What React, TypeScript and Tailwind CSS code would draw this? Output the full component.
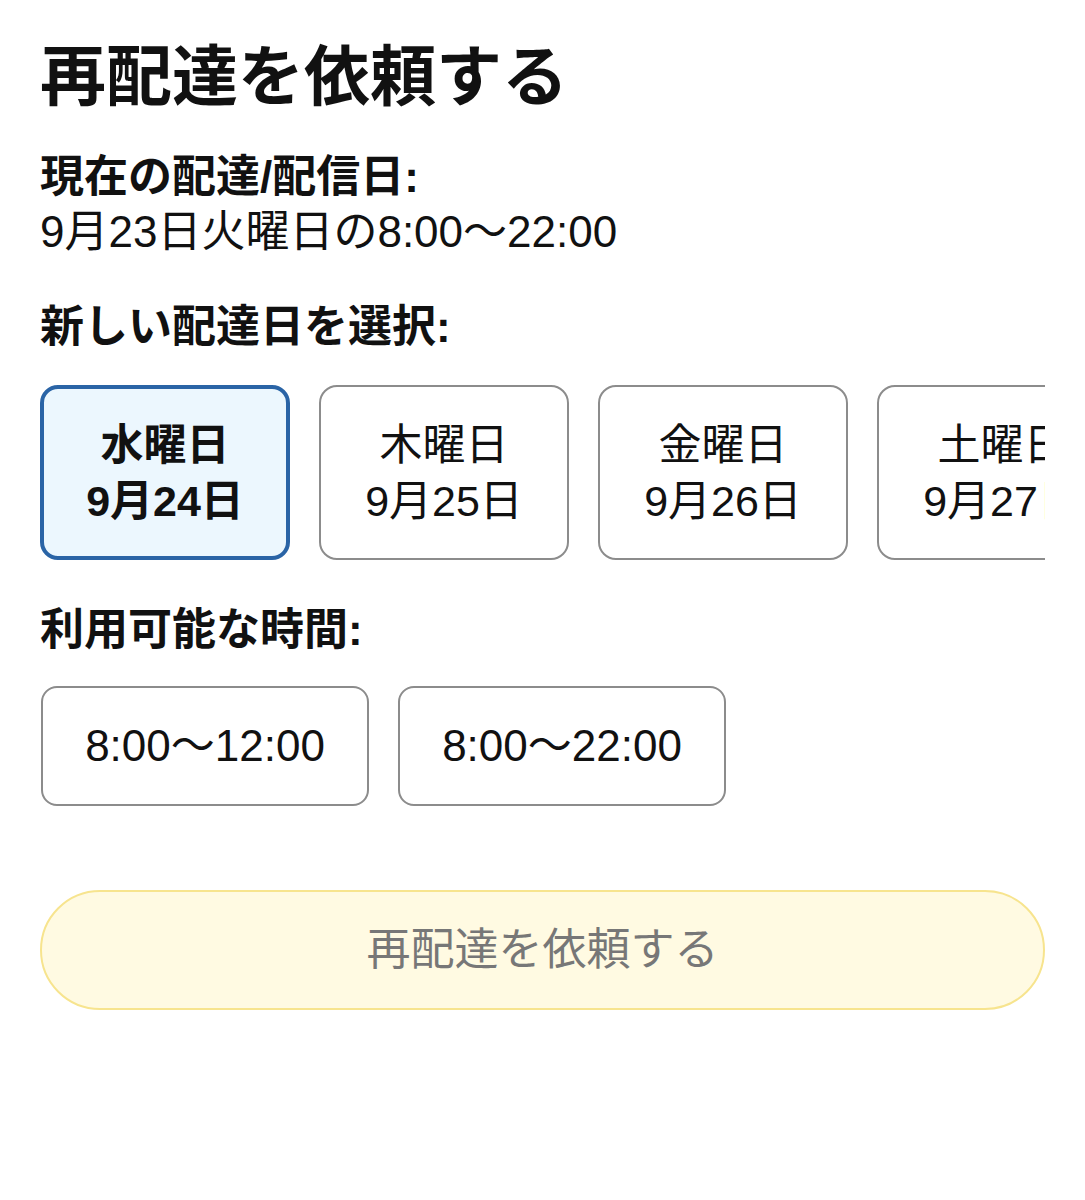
import React from 'react';

const font = { fontFamily: '"Liberation Sans", "Noto Sans CJK JP", sans-serif' };

const days = [
  { day: '水曜日', date: '9月24日' },
  { day: '木曜日', date: '9月25日' },
  { day: '金曜日', date: '9月26日' },
  { day: '土曜日', date: '9月27日' },
];

const times = ['8:00〜12:00', '8:00〜22:00'];

export default function App() {
  const selected = 0;
  return (
    <div
      className="w-[1085px] min-h-[1200px] bg-white text-[#111] px-10 pt-[38px] flex flex-col"
      style={font}
    >
      <h1 className="text-[66px] font-bold leading-[78px]">再配達を依頼する</h1>

      <div className="mt-[33px] text-[44px] leading-[55px]">
        <div className="font-bold">現在の配達/配信日:</div>
        <div>9月23日火曜日の8:00〜22:00</div>
      </div>

      <div className="mt-[40px] text-[44px] leading-[55px] font-bold">新しい配達日を選択:</div>

      <div className="mt-[31px] w-[1005px] overflow-hidden">
        <div className="flex gap-[29px]">
          {days.map((d, i) => (
            <button
              key={d.date}
              className={`shrink-0 w-[250px] h-[175px] rounded-[18px] flex flex-col items-center justify-center text-[43px] leading-[56px] ${
                i === selected
                  ? 'border-[4px] border-[#2a64a6] bg-[#ecf7fe] font-bold'
                  : 'border-2 border-[#8c8c8c] bg-white'
              }`}
            >
              <span>{d.day}</span>
              <span>{d.date}</span>
            </button>
          ))}
        </div>
      </div>

      <div className="mt-[42px] text-[44px] leading-[55px] font-bold">利用可能な時間:</div>

      <div className="mt-[29px] flex gap-[29px] pl-[1px]">
        {times.map((t) => (
          <button
            key={t}
            className="w-[328px] h-[120px] rounded-[16px] border-2 border-[#8c8c8c] bg-white text-[44px] flex items-center justify-center"
          >
            {t}
          </button>
        ))}
      </div>

      <button className="mt-[84px] w-[1005px] h-[120px] rounded-full border-2 border-[#f7e48e] bg-[#fffae2] text-[#777] text-[44px] flex items-center justify-center">
        再配達を依頼する
      </button>
    </div>
  );
}
